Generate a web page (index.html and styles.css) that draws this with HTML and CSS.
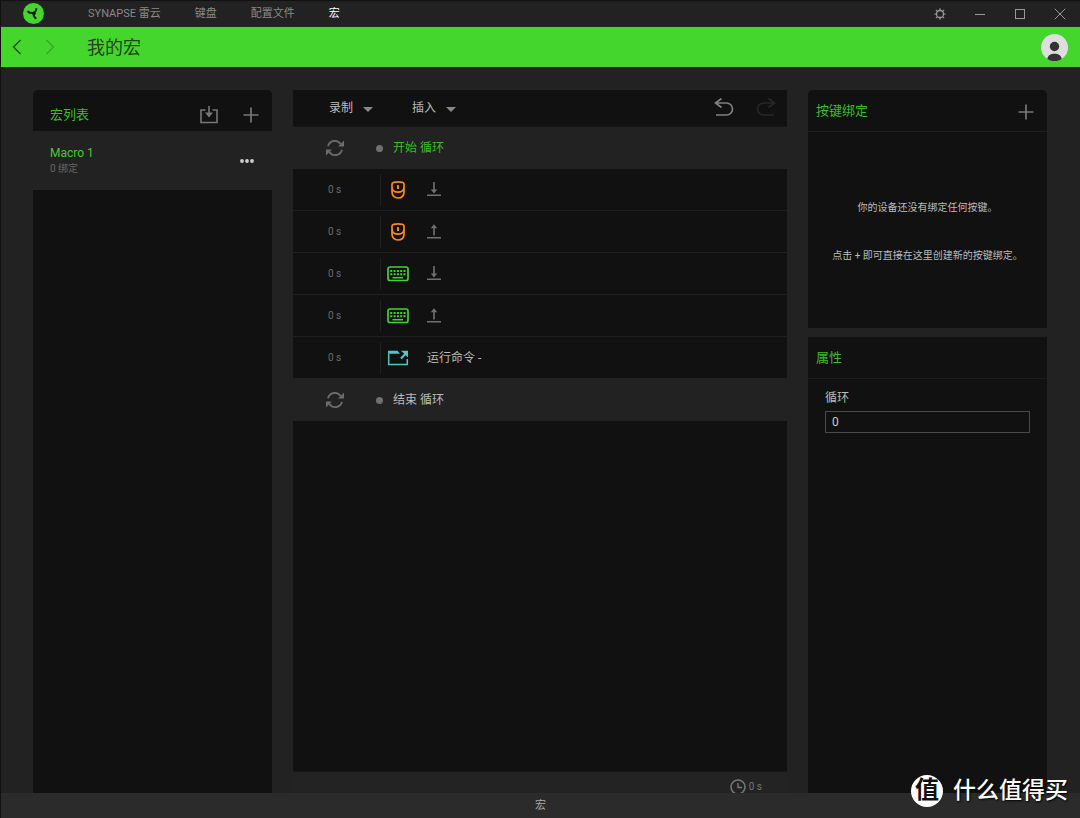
FILE: index.html
```html
<!DOCTYPE html>
<html lang="zh-CN">
<head>
<meta charset="utf-8">
<title>我的宏</title>
<link rel="stylesheet" href="styles.css">
</head>
<body>
<svg class="defs" aria-hidden="true">
  <symbol id="loop" viewBox="0 0 20 18"><path d="M3 7.2A7 7 0 0 1 15.6 5M17 10.8A7 7 0 0 1 4.4 13" fill="none" stroke="currentColor" stroke-width="1.8"/><path d="M19 1.500v6h-6zM1 16.500v-6h6z" fill="currentColor"/></symbol>
  <symbol id="mouse" viewBox="0 0 14 18"><path d="M1 3.200Q1 1.600 2.600 1.300Q7 .5 11.400 1.300Q13 1.600 13 3.200V11C13 14.800 10.500 17 7 17S1 14.800 1 11ZM1 6C1 9.200 3.500 11.200 7 11.200s6-2 6-5.200" fill="none" stroke="currentColor" stroke-width="1.700"/><rect x="6" y="4" width="2" height="4" rx=".6" fill="currentColor"/></symbol>
  <symbol id="keyboard" viewBox="0 0 22 16"><rect x="1" y="1" width="20" height="13.500" rx="2" fill="none" stroke="currentColor" stroke-width="1.700"/><path d="M3.300 5h15.500M3.300 8.300h15.500" stroke="currentColor" stroke-width="1.900" stroke-dasharray="2 1.300"/><path d="M5.500 11.700h10.500" stroke="currentColor" stroke-width="1.500"/></symbol>
  <symbol id="press" viewBox="0 0 14 15"><path d="M7 0v9M0 13.200h14" stroke="currentColor" stroke-width="1.600" fill="none"/><path d="M3.800 7.500h6.400L7 11.500z" fill="currentColor"/></symbol>
  <symbol id="release" viewBox="0 0 14 15"><path d="M7 2v9.500M0 13.700h14" stroke="currentColor" stroke-width="1.600" fill="none"/><path d="M3.800 4.300h6.400L7 .2z" fill="currentColor"/></symbol>
  <symbol id="plus" viewBox="0 0 16 16"><path d="M8 .5v15M.5 8h15" stroke="currentColor" stroke-width="1.700"/></symbol>
  <symbol id="undo" viewBox="0 0 20 20"><path d="M7.500 .5L1.500 5l6 4.500M2 5H12.500a6 6 0 0 1 0 12H2" fill="none" stroke="currentColor" stroke-width="1.700"/></symbol>
  <symbol id="redo" viewBox="0 0 20 20"><path d="M12.500 .5L18.500 5l-6 4.500M18 5H7.500a6 6 0 0 0 0 12H18" fill="none" stroke="currentColor" stroke-width="1.700"/></symbol>
</svg>
<div class="app">
  <header class="titlebar">
    <svg class="logo" viewBox="0 0 20 20" aria-hidden="true"><circle cx="10" cy="10" r="10" fill="#44d62c"/><path d="M4.300 7.800Q6.200 9.800 10 9.600M10.200 9.600Q12.400 8.600 12.800 5M10.300 10Q9.600 12.600 12.600 15" fill="none" stroke="#182014" stroke-width="1.900"/><circle cx="10.400" cy="9.900" r="1.700" fill="#182014"/></svg>
    <nav class="tabs">
      <a href="#">SYNAPSE 雷云</a>
      <a href="#">键盘</a>
      <a href="#">配置文件</a>
      <a href="#" class="active" aria-current="page">宏</a>
    </nav>
    <div class="window-controls">
      <button aria-label="设置"><svg viewBox="0 0 12 12" fill="none" stroke="currentColor"><circle cx="6" cy="6" r="3.500" stroke-width="1.300"/><path d="M6 .3v2M6 9.700v2M.3 6h2M9.700 6h2M1.900 1.900l1.500 1.500M8.600 8.600l1.500 1.500M1.900 10.100l1.500-1.500M8.600 3.400l1.500-1.500" stroke-width="1.200"/></svg></button>
      <button aria-label="最小化"><svg viewBox="0 0 12 12" stroke="currentColor"><path d="M1 6.500h10"/></svg></button>
      <button aria-label="最大化"><svg viewBox="0 0 12 12" fill="none" stroke="currentColor"><rect x="1.500" y="1.500" width="9" height="9"/></svg></button>
      <button aria-label="关闭"><svg viewBox="0 0 12 12" stroke="currentColor"><path d="M.7.700l10.600 10.600M11.300.7L.7 11.300"/></svg></button>
    </div>
  </header>
  <div class="banner">
    <button class="history" aria-label="后退"><svg viewBox="0 0 10 16" fill="none" stroke="currentColor"><path d="M8.500 1L1.500 8l7 7" stroke-width="1.300"/></svg></button>
    <button class="history" aria-label="前进" disabled><svg viewBox="0 0 10 16" fill="none" stroke="currentColor"><path d="M1.500 1l7 7-7 7" stroke-width="1.300"/></svg></button>
    <h1>我的宏</h1>
    <button class="avatar" aria-label="用户"><svg viewBox="0 0 27 27"><circle cx="13.500" cy="13.500" r="13.500" fill="#dedede"/><circle cx="13.500" cy="12.500" r="4.700" fill="#333"/><path d="M6.300 25c.4-3.500 3.300-5.200 7.200-5.200s6.800 1.700 7.200 5.200A13.500 13.500 0 0 1 6.300 25z" fill="#333"/></svg></button>
  </div>
  <main class="workspace">
    <aside class="macros">
      <div class="macros-head">
        <h2>宏列表</h2>
        <button aria-label="导入"><svg class="icon-import" viewBox="0 0 18 18"><path d="M5.500 4H1V16.500h16V4h-4.500M9 0v8" fill="none" stroke="currentColor" stroke-width="1.600"/><path d="M5 6.500h8L9 11.500z" fill="currentColor"/></svg></button>
        <button aria-label="新建宏"><svg class="icon-plus"><use href="#plus"/></svg></button>
      </div>
      <div class="macro">
        <div class="macro-text"><strong>Macro 1</strong><small>0 绑定</small></div>
        <button class="more" aria-label="更多"><svg viewBox="0 0 14 4" fill="#d0d0d0"><circle cx="2" cy="2" r="1.900"/><circle cx="7" cy="2" r="1.900"/><circle cx="12" cy="2" r="1.900"/></svg></button>
      </div>
    </aside>
    <section class="editor">
      <div class="toolbar">
        <button class="menu">录制<span class="caret"></span></button>
        <button class="menu">插入<span class="caret"></span></button>
        <div class="undo-group">
          <button aria-label="撤销"><svg><use href="#undo"/></svg></button>
          <button aria-label="重做" disabled><svg><use href="#redo"/></svg></button>
        </div>
      </div>
      <ol class="steps">
        <li class="loop-row start"><svg class="loop-icon"><use href="#loop"/></svg><span class="dot"></span><span>开始 循环</span></li>
        <li class="step"><span class="delay">0 s</span><div class="action"><span class="device orange"><svg class="mouse"><use href="#mouse"/></svg></span><svg class="arrow"><use href="#press"/></svg></div></li>
        <li class="step"><span class="delay">0 s</span><div class="action"><span class="device orange"><svg class="mouse"><use href="#mouse"/></svg></span><svg class="arrow"><use href="#release"/></svg></div></li>
        <li class="step"><span class="delay">0 s</span><div class="action"><span class="device green"><svg class="keyboard"><use href="#keyboard"/></svg></span><svg class="arrow"><use href="#press"/></svg></div></li>
        <li class="step"><span class="delay">0 s</span><div class="action"><span class="device green"><svg class="keyboard"><use href="#keyboard"/></svg></span><svg class="arrow"><use href="#release"/></svg></div></li>
        <li class="step"><span class="delay">0 s</span><div class="action"><span class="device teal"><svg class="keyboard" viewBox="0 0 22 16"><path d="M1.700 3.500V14.500H20.300V9" fill="none" stroke="currentColor" stroke-width="1.500"/><path d="M1 .7H10.500L13 3.800H1zM14 .7h7v6.800l-2.300-2.300-4 4-1.500-1.500 4-4z" fill="currentColor"/></svg></span><span>运行命令 -</span></div></li>
        <li class="loop-row"><svg class="loop-icon"><use href="#loop"/></svg><span class="dot"></span><span>结束 循环</span></li>
      </ol>
      <div class="duration"><svg viewBox="0 0 16 16" fill="none" stroke="currentColor"><circle cx="8" cy="8" r="7" stroke-width="1.600"/><path d="M8 4v4.500h4" stroke-width="1.400"/></svg><span>0 s</span></div>
    </section>
    <aside class="side">
      <section class="bindings">
        <div class="side-head"><h2>按键绑定</h2><button aria-label="添加按键绑定"><svg class="icon-plus"><use href="#plus"/></svg></button></div>
        <div class="empty"><p>你的设备还没有绑定任何按键。</p><p>点击 + 即可直接在这里创建新的按键绑定。</p></div>
      </section>
      <section class="properties">
        <div class="side-head"><h2>属性</h2></div>
        <div class="field"><label for="loops">循环</label><input id="loops" type="text" value="0"></div>
      </section>
    </aside>
  </main>
  <footer class="statusbar">宏</footer>
  <div class="watermark"><span class="seal">值</span><span>什么值得买</span></div>
</div>
</body>
</html>
```

FILE: styles.css
```css
* { box-sizing: border-box; }
body {
  margin: 0;
  background: #222;
  color: #bbb;
  font: 12px/16px Roboto, "Noto Sans CJK SC", sans-serif;
}
.defs { position: absolute; width: 0; height: 0; }
.app {
  position: relative;
  display: flex;
  flex-direction: column;
  height: 100vh;
  border: 1px solid #111;
  border-width: 1px 0 0 1px;
}
h1, h2, p, ol { margin: 0; padding: 0; font-weight: 400; }
svg { display: block; flex: none; }
button {
  display: flex;
  align-items: center;
  justify-content: center;
  margin: 0;
  padding: 0;
  border: 0;
  background: none;
  color: #777;
  font: inherit;
  cursor: pointer;
}

.titlebar {
  flex: none;
  display: flex;
  align-items: center;
  height: 26px;
  padding: 0 0 0 22px;
  border-bottom: 1px solid #1c301a;
}
.logo { width: 21px; height: 21px; }
.tabs { display: flex; gap: 34px; margin-left: 44px; font-size: 11px; }
.tabs a { color: #888; text-decoration: none; }
.tabs .active { color: #fff; }
.window-controls { display: flex; margin-left: auto; }
.window-controls button { width: 40px; height: 24px; color: #999; }
.window-controls svg { width: 12px; height: 12px; }

.banner {
  flex: none;
  display: flex;
  align-items: center;
  height: 40px;
  padding: 0 12px 0 11px;
  background: #44d62c;
}
.history { width: 10px; height: 16px; margin-right: 23px; color: #1d4d16; }
.history:disabled { color: #38a526; }
.history svg { width: 10px; height: 16px; }
.banner h1 { margin-left: 9px; padding-top: 1px; color: #24421f; font-size: 18px; line-height: 24px; }
.avatar { margin-left: auto; }
.avatar svg { width: 27px; height: 27px; }

.workspace {
  flex: 1;
  min-height: 0;
  display: flex;
  gap: 21px;
  padding: 23px 33px 0 32px;
  overflow: hidden;
}
h2 { color: #3cbc28; font-size: 13px; line-height: 18px; }
.icon-plus { width: 16px; height: 16px; }
.macros { flex: 0 0 239px; background: #111; border-radius: 5px 5px 0 0; }
.macros-head { display: flex; align-items: center; height: 41px; padding: 8px 13px 0 17px; }
.macros-head h2 { margin-right: auto; }
.macros-head button + button { margin-left: 25px; }
.icon-import { width: 18px; height: 18px; }
.macro {
  display: flex;
  align-items: center;
  justify-content: space-between;
  height: 59px;
  padding: 0 18px 0 17px;
  background: #222;
}
.macro-text { display: grid; }
.macro strong { color: #41cb2a; font-weight: 400; }
.macro small { color: #666; font-size: 10px; }
.more svg { width: 14px; height: 4px; }

.editor { flex: 1; min-width: 0; display: flex; flex-direction: column; background: #111; }
.toolbar {
  flex: none;
  display: flex;
  align-items: center;
  gap: 39px;
  height: 37px;
  padding: 0 11px 0 36px;
  border-bottom: 1px dotted #1c1c1c;
}
.menu { gap: 10px; color: #bbb; }
.caret { margin-top: 3px; border: 5px solid transparent; border-top-color: #888; border-bottom: 0; }
.undo-group { display: flex; gap: 22px; margin-left: auto; }
.undo-group svg { width: 20px; height: 20px; }
.undo-group button { color: #808080; }
.undo-group button:disabled { color: #272727; }

.steps { flex: 1; list-style: none; border-bottom: 1px dotted #1c1c1c; }
.loop-row { display: flex; align-items: center; height: 42px; padding-left: 32px; background: #222; color: #bbb; }
.loop-row.start { color: #3cbc28; }
.loop-icon { width: 20px; height: 18px; color: #6c6c6c; }
.dot { width: 7px; height: 7px; margin: 0 10px 0 31px; border-radius: 50%; background: #707070; }
.step { display: flex; align-items: center; height: 42px; padding-left: 35px; border-bottom: 1px solid #202020; }
.delay { width: 52px; color: #6c6c6c; font-size: 10px; }
.action { display: flex; align-items: center; height: 32px; padding-left: 6px; border-left: 1px solid #1f1f1f; }
.device { display: grid; place-items: center; width: 22px; margin-right: 18px; }
.mouse { width: 14px; height: 18px; }
.keyboard { width: 22px; height: 16px; }
.arrow { width: 14px; height: 15px; color: #707070; }
.orange { color: #ff8a10; }
.green { color: #41d42a; }
.teal { color: #5bbfc6; }
.duration {
  flex: none;
  display: flex;
  align-items: center;
  justify-content: flex-end;
  gap: 3px;
  height: 21px;
  padding: 9px 25px 0 0;
  background: #232323;
  color: #777;
  font-size: 10px;
}
.duration svg { width: 16px; height: 16px; }

.side { flex: 0 0 239px; display: flex; flex-direction: column; gap: 9px; }
.bindings { display: flex; flex-direction: column; height: 238px; background: #111; border-radius: 5px 5px 0 0; }
.side-head {
  display: flex;
  align-items: center;
  justify-content: space-between;
  height: 42px;
  padding: 0 13px 0 8px;
  border-bottom: 1px solid #1e1e1e;
}
.side-head button { padding-top: 3px; }
.empty {
  flex: 1;
  display: flex;
  flex-direction: column;
  align-items: center;
  gap: 32px;
  padding-top: 68px;
  font-size: 10px;
}
.properties { flex: 1; background: #111; }
.field { display: grid; gap: 5px; padding: 11px 17px; }
.field input {
  width: 100%;
  height: 22px;
  padding: 0 6px;
  border: 1px solid #4a4a4a;
  background: #111;
  color: #ccc;
  font: inherit;
}

.statusbar {
  flex: none;
  height: 25px;
  background: #2b2b2b;
  color: #aaa;
  font-size: 11px;
  line-height: 26px;
  text-align: center;
}
.watermark {
  position: absolute;
  right: 12px;
  bottom: 11px;
  display: flex;
  align-items: center;
  gap: 10px;
  color: #fff;
  font-size: 23px;
  line-height: 32px;
  font-weight: 500;
  text-shadow: 1px 1px 2px #000;
}
.seal {
  width: 32px;
  height: 32px;
  border-radius: 50%;
  background: #fff;
  color: #111;
  font-size: 24px;
  font-weight: 700;
  line-height: 31px;
  text-align: center;
  text-shadow: none;
}
```
